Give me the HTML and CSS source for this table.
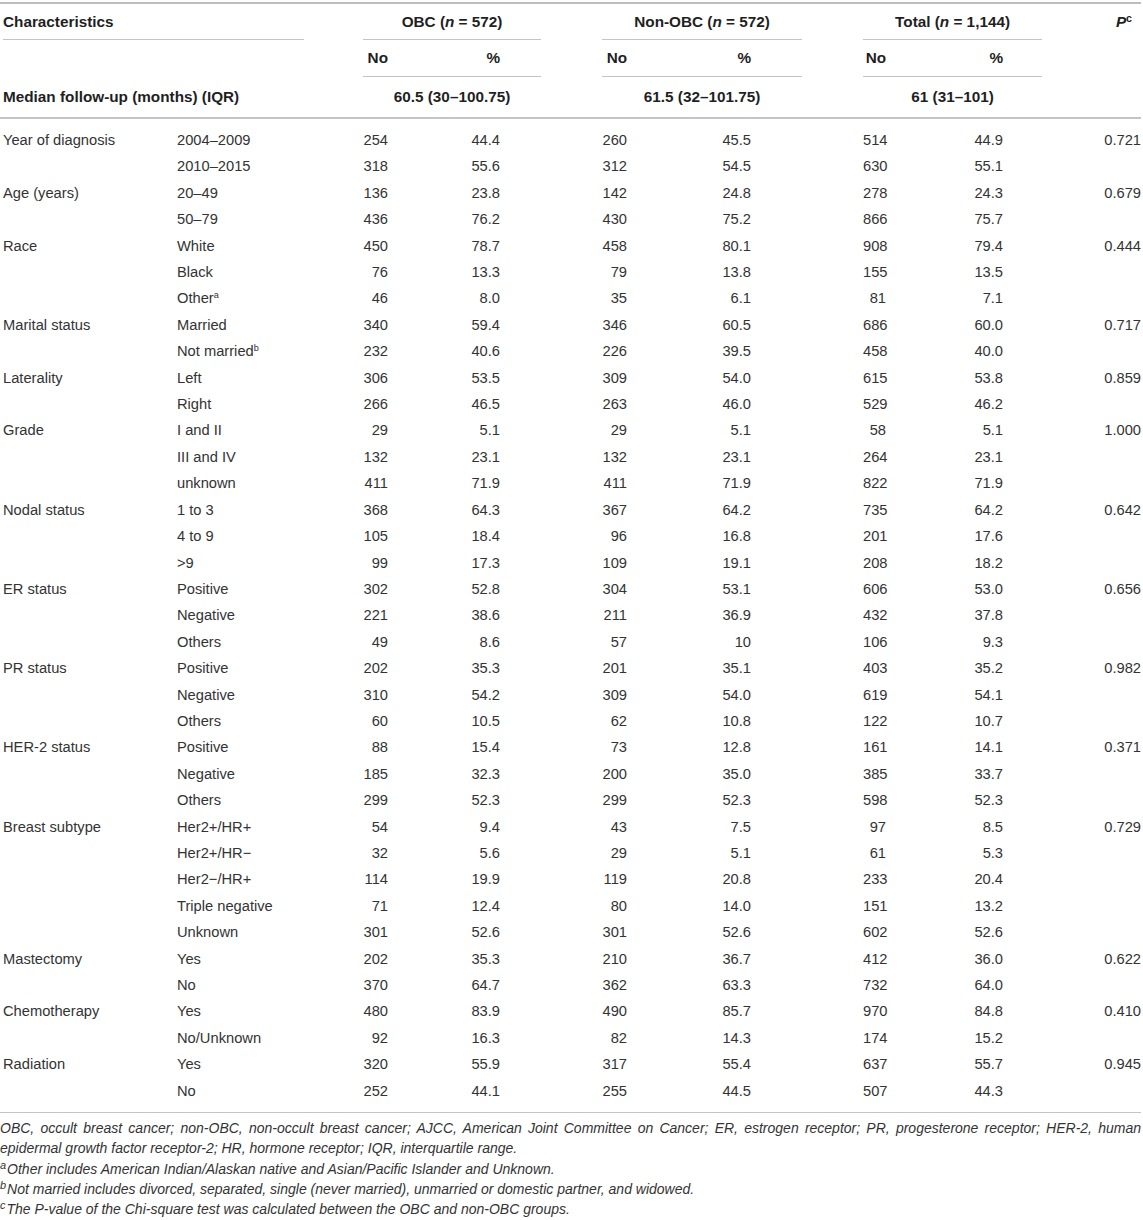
FILE: index.html
```html
<!DOCTYPE html>
<html lang="en">
<head>
<meta charset="utf-8">
<title>Table</title>
<link rel="stylesheet" href="styles.css">
</head>
<body>
<div class="wrap">
<table class="tbl">
<colgroup>
<col class="w-c1"><col class="w-c2"><col class="w-g0">
<col class="w-no"><col class="w-obcp"><col class="w-g">
<col class="w-no"><col class="w-nonp"><col class="w-g">
<col class="w-tno"><col class="w-totp"><col class="w-p">
</colgroup>
<thead>
<tr class="h1">
<th colspan="2" class="char">Characteristics</th>
<th></th>
<th colspan="2" class="grp">OBC (<i>n</i> = 572)</th>
<th></th>
<th colspan="2" class="grp">Non-OBC (<i>n</i> = 572)</th>
<th></th>
<th colspan="2" class="grp">Total (<i>n</i> = 1,144)</th>
<th class="phead"><i>P</i><sup>c</sup></th>
</tr>
<tr class="h2">
<th></th><th></th><th></th>
<th class="sub no">No</th><th class="sub pct obc">%</th>
<th></th>
<th class="sub no">No</th><th class="sub pct non">%</th>
<th></th>
<th class="sub no">No</th><th class="sub pct tot">%</th>
<th></th>
</tr>
<tr class="h3">
<th colspan="2" class="left">Median follow-up (months) (IQR)</th>
<th></th>
<th colspan="2">60.5 (30–100.75)</th>
<th></th>
<th colspan="2">61.5 (32–101.75)</th>
<th></th>
<th colspan="2">61 (31–101)</th>
<th></th>
</tr>
</thead>
<tbody>
<tr class="first"><td class="c1">Year of diagnosis</td><td class="c2">2004–2009</td><td></td><td class="no">254</td><td class="pct obc">44.4</td><td></td><td class="no">260</td><td class="pct non">45.5</td><td></td><td class="no">514</td><td class="pct tot">44.9</td><td class="p">0.721</td></tr>
<tr><td class="c1"></td><td class="c2">2010–2015</td><td></td><td class="no">318</td><td class="pct obc">55.6</td><td></td><td class="no">312</td><td class="pct non">54.5</td><td></td><td class="no">630</td><td class="pct tot">55.1</td><td class="p"></td></tr>
<tr><td class="c1">Age (years)</td><td class="c2">20–49</td><td></td><td class="no">136</td><td class="pct obc">23.8</td><td></td><td class="no">142</td><td class="pct non">24.8</td><td></td><td class="no">278</td><td class="pct tot">24.3</td><td class="p">0.679</td></tr>
<tr><td class="c1"></td><td class="c2">50–79</td><td></td><td class="no">436</td><td class="pct obc">76.2</td><td></td><td class="no">430</td><td class="pct non">75.2</td><td></td><td class="no">866</td><td class="pct tot">75.7</td><td class="p"></td></tr>
<tr><td class="c1">Race</td><td class="c2">White</td><td></td><td class="no">450</td><td class="pct obc">78.7</td><td></td><td class="no">458</td><td class="pct non">80.1</td><td></td><td class="no">908</td><td class="pct tot">79.4</td><td class="p">0.444</td></tr>
<tr><td class="c1"></td><td class="c2">Black</td><td></td><td class="no">76</td><td class="pct obc">13.3</td><td></td><td class="no">79</td><td class="pct non">13.8</td><td></td><td class="no">155</td><td class="pct tot">13.5</td><td class="p"></td></tr>
<tr><td class="c1"></td><td class="c2">Other<sup>a</sup></td><td></td><td class="no">46</td><td class="pct obc">8.0</td><td></td><td class="no">35</td><td class="pct non">6.1</td><td></td><td class="no">81</td><td class="pct tot">7.1</td><td class="p"></td></tr>
<tr><td class="c1">Marital status</td><td class="c2">Married</td><td></td><td class="no">340</td><td class="pct obc">59.4</td><td></td><td class="no">346</td><td class="pct non">60.5</td><td></td><td class="no">686</td><td class="pct tot">60.0</td><td class="p">0.717</td></tr>
<tr><td class="c1"></td><td class="c2">Not married<sup>b</sup></td><td></td><td class="no">232</td><td class="pct obc">40.6</td><td></td><td class="no">226</td><td class="pct non">39.5</td><td></td><td class="no">458</td><td class="pct tot">40.0</td><td class="p"></td></tr>
<tr><td class="c1">Laterality</td><td class="c2">Left</td><td></td><td class="no">306</td><td class="pct obc">53.5</td><td></td><td class="no">309</td><td class="pct non">54.0</td><td></td><td class="no">615</td><td class="pct tot">53.8</td><td class="p">0.859</td></tr>
<tr><td class="c1"></td><td class="c2">Right</td><td></td><td class="no">266</td><td class="pct obc">46.5</td><td></td><td class="no">263</td><td class="pct non">46.0</td><td></td><td class="no">529</td><td class="pct tot">46.2</td><td class="p"></td></tr>
<tr><td class="c1">Grade</td><td class="c2">I and II</td><td></td><td class="no">29</td><td class="pct obc">5.1</td><td></td><td class="no">29</td><td class="pct non">5.1</td><td></td><td class="no">58</td><td class="pct tot">5.1</td><td class="p">1.000</td></tr>
<tr><td class="c1"></td><td class="c2">III and IV</td><td></td><td class="no">132</td><td class="pct obc">23.1</td><td></td><td class="no">132</td><td class="pct non">23.1</td><td></td><td class="no">264</td><td class="pct tot">23.1</td><td class="p"></td></tr>
<tr><td class="c1"></td><td class="c2">unknown</td><td></td><td class="no">411</td><td class="pct obc">71.9</td><td></td><td class="no">411</td><td class="pct non">71.9</td><td></td><td class="no">822</td><td class="pct tot">71.9</td><td class="p"></td></tr>
<tr><td class="c1">Nodal status</td><td class="c2">1 to 3</td><td></td><td class="no">368</td><td class="pct obc">64.3</td><td></td><td class="no">367</td><td class="pct non">64.2</td><td></td><td class="no">735</td><td class="pct tot">64.2</td><td class="p">0.642</td></tr>
<tr><td class="c1"></td><td class="c2">4 to 9</td><td></td><td class="no">105</td><td class="pct obc">18.4</td><td></td><td class="no">96</td><td class="pct non">16.8</td><td></td><td class="no">201</td><td class="pct tot">17.6</td><td class="p"></td></tr>
<tr><td class="c1"></td><td class="c2">&gt;9</td><td></td><td class="no">99</td><td class="pct obc">17.3</td><td></td><td class="no">109</td><td class="pct non">19.1</td><td></td><td class="no">208</td><td class="pct tot">18.2</td><td class="p"></td></tr>
<tr><td class="c1">ER status</td><td class="c2">Positive</td><td></td><td class="no">302</td><td class="pct obc">52.8</td><td></td><td class="no">304</td><td class="pct non">53.1</td><td></td><td class="no">606</td><td class="pct tot">53.0</td><td class="p">0.656</td></tr>
<tr><td class="c1"></td><td class="c2">Negative</td><td></td><td class="no">221</td><td class="pct obc">38.6</td><td></td><td class="no">211</td><td class="pct non">36.9</td><td></td><td class="no">432</td><td class="pct tot">37.8</td><td class="p"></td></tr>
<tr><td class="c1"></td><td class="c2">Others</td><td></td><td class="no">49</td><td class="pct obc">8.6</td><td></td><td class="no">57</td><td class="pct non">10</td><td></td><td class="no">106</td><td class="pct tot">9.3</td><td class="p"></td></tr>
<tr><td class="c1">PR status</td><td class="c2">Positive</td><td></td><td class="no">202</td><td class="pct obc">35.3</td><td></td><td class="no">201</td><td class="pct non">35.1</td><td></td><td class="no">403</td><td class="pct tot">35.2</td><td class="p">0.982</td></tr>
<tr><td class="c1"></td><td class="c2">Negative</td><td></td><td class="no">310</td><td class="pct obc">54.2</td><td></td><td class="no">309</td><td class="pct non">54.0</td><td></td><td class="no">619</td><td class="pct tot">54.1</td><td class="p"></td></tr>
<tr><td class="c1"></td><td class="c2">Others</td><td></td><td class="no">60</td><td class="pct obc">10.5</td><td></td><td class="no">62</td><td class="pct non">10.8</td><td></td><td class="no">122</td><td class="pct tot">10.7</td><td class="p"></td></tr>
<tr><td class="c1">HER-2 status</td><td class="c2">Positive</td><td></td><td class="no">88</td><td class="pct obc">15.4</td><td></td><td class="no">73</td><td class="pct non">12.8</td><td></td><td class="no">161</td><td class="pct tot">14.1</td><td class="p">0.371</td></tr>
<tr><td class="c1"></td><td class="c2">Negative</td><td></td><td class="no">185</td><td class="pct obc">32.3</td><td></td><td class="no">200</td><td class="pct non">35.0</td><td></td><td class="no">385</td><td class="pct tot">33.7</td><td class="p"></td></tr>
<tr><td class="c1"></td><td class="c2">Others</td><td></td><td class="no">299</td><td class="pct obc">52.3</td><td></td><td class="no">299</td><td class="pct non">52.3</td><td></td><td class="no">598</td><td class="pct tot">52.3</td><td class="p"></td></tr>
<tr><td class="c1">Breast subtype</td><td class="c2">Her2+/HR+</td><td></td><td class="no">54</td><td class="pct obc">9.4</td><td></td><td class="no">43</td><td class="pct non">7.5</td><td></td><td class="no">97</td><td class="pct tot">8.5</td><td class="p">0.729</td></tr>
<tr><td class="c1"></td><td class="c2">Her2+/HR−</td><td></td><td class="no">32</td><td class="pct obc">5.6</td><td></td><td class="no">29</td><td class="pct non">5.1</td><td></td><td class="no">61</td><td class="pct tot">5.3</td><td class="p"></td></tr>
<tr><td class="c1"></td><td class="c2">Her2−/HR+</td><td></td><td class="no">114</td><td class="pct obc">19.9</td><td></td><td class="no">119</td><td class="pct non">20.8</td><td></td><td class="no">233</td><td class="pct tot">20.4</td><td class="p"></td></tr>
<tr><td class="c1"></td><td class="c2">Triple negative</td><td></td><td class="no">71</td><td class="pct obc">12.4</td><td></td><td class="no">80</td><td class="pct non">14.0</td><td></td><td class="no">151</td><td class="pct tot">13.2</td><td class="p"></td></tr>
<tr><td class="c1"></td><td class="c2">Unknown</td><td></td><td class="no">301</td><td class="pct obc">52.6</td><td></td><td class="no">301</td><td class="pct non">52.6</td><td></td><td class="no">602</td><td class="pct tot">52.6</td><td class="p"></td></tr>
<tr><td class="c1">Mastectomy</td><td class="c2">Yes</td><td></td><td class="no">202</td><td class="pct obc">35.3</td><td></td><td class="no">210</td><td class="pct non">36.7</td><td></td><td class="no">412</td><td class="pct tot">36.0</td><td class="p">0.622</td></tr>
<tr><td class="c1"></td><td class="c2">No</td><td></td><td class="no">370</td><td class="pct obc">64.7</td><td></td><td class="no">362</td><td class="pct non">63.3</td><td></td><td class="no">732</td><td class="pct tot">64.0</td><td class="p"></td></tr>
<tr><td class="c1">Chemotherapy</td><td class="c2">Yes</td><td></td><td class="no">480</td><td class="pct obc">83.9</td><td></td><td class="no">490</td><td class="pct non">85.7</td><td></td><td class="no">970</td><td class="pct tot">84.8</td><td class="p">0.410</td></tr>
<tr><td class="c1"></td><td class="c2">No/Unknown</td><td></td><td class="no">92</td><td class="pct obc">16.3</td><td></td><td class="no">82</td><td class="pct non">14.3</td><td></td><td class="no">174</td><td class="pct tot">15.2</td><td class="p"></td></tr>
<tr><td class="c1">Radiation</td><td class="c2">Yes</td><td></td><td class="no">320</td><td class="pct obc">55.9</td><td></td><td class="no">317</td><td class="pct non">55.4</td><td></td><td class="no">637</td><td class="pct tot">55.7</td><td class="p">0.945</td></tr>
<tr class="last"><td class="c1"></td><td class="c2">No</td><td></td><td class="no">252</td><td class="pct obc">44.1</td><td></td><td class="no">255</td><td class="pct non">44.5</td><td></td><td class="no">507</td><td class="pct tot">44.3</td><td class="p"></td></tr>
</tbody>
</table>
<div class="notes">
<p class="just"><i>OBC, occult breast cancer; non-OBC, non-occult breast cancer; AJCC, American Joint Committee on Cancer; ER, estrogen receptor; PR, progesterone receptor; HER-2, human epidermal growth factor receptor-2; HR, hormone receptor; IQR, interquartile range.</i></p>
<p><i><sup>a</sup>Other includes American Indian/Alaskan native and Asian/Pacific Islander and Unknown.</i></p>
<p><i><sup>b</sup>Not married includes divorced, separated, single (never married), unmarried or domestic partner, and widowed.</i></p>
<p><i><sup>c</sup>The P-value of the Chi-square test was calculated between the OBC and non-OBC groups.</i></p>
</div>
</div>
</body>
</html>
```
FILE: styles.css
```css
html, body {
  margin: 0;
  padding: 0;
  background: #ffffff;
}
body {
  font-family: "Liberation Sans", Arial, Helvetica, sans-serif;
  color: #333333;
}
.wrap {
  padding-top: 2px;
  width: 1141px;
}
.tbl {
  border-collapse: separate;
  border-spacing: 0;
  table-layout: fixed;
  width: 1141px;
  border-top: 2px solid #bdbdbd;
  font-size: 14.7px;
}
.w-c1 { width: 175px; }
.w-c2 { width: 129px; }
.w-g0 { width: 59px; }
.w-no { width: 27px; }
.w-tno { width: 25px; }
.w-obcp { width: 151px; }
.w-nonp { width: 173px; }
.w-totp { width: 154px; }
.w-g { width: 61px; }
.w-p { width: 99px; }

th, td {
  padding: 0;
  white-space: nowrap;
  vertical-align: middle;
}
th {
  font-weight: bold;
  font-size: 15.3px;
  color: #1f1f1f;
  text-align: center;
}
.h1 { height: 36px; }
.h2 { height: 37px; }
.h3 { height: 42px; }
.h1 .char {
  text-align: left;
  padding-left: 3px;
  background: linear-gradient(#c4c4c4, #c4c4c4) no-repeat left 3px bottom / calc(100% - 3px) 1px;
}
.h1 .grp { border-bottom: 1px solid #c4c4c4; }
.h1 .phead {
  text-align: right;
  padding-right: 9px;
}
.h2 .sub { border-bottom: 1px solid #c4c4c4; }
.h3 th { border-bottom: 2px solid #c4c4c4; }
.h3 .left {
  text-align: left;
  padding-left: 3px;
}
td {
  line-height: 26.4px;
}
.first td { padding-top: 8px; }
.last td { padding-bottom: 8px; border-bottom: 1px solid #c4c4c4; }
.c1 { padding-left: 3px; }
.c2 { padding-left: 2px; }
.no { text-align: right; padding-right: 2px; }
.pct { text-align: right; }
.pct.obc { padding-right: 41px; }
.pct.non { padding-right: 51px; }
.pct.tot { padding-right: 39px; }
.p { text-align: right; }
sup {
  font-size: 0.62em;
  line-height: 0;
  vertical-align: 0.5em;
}
.phead sup {
  font-size: 0.7em;
  font-weight: bold;
}
.notes {
  padding-top: 5px;
  font-size: 14px;
  line-height: 20.3px;
  color: #333333;
}
.notes p {
  margin: 0;
}
.notes .just {
  text-align: justify;
}
.notes sup {
  font-size: 0.78em;
  vertical-align: 0.45em;
  margin-right: 1px;
}
```
